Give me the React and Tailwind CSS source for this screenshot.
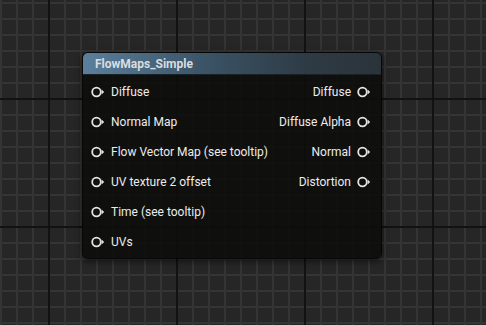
import React from 'react';

const inputs = ['Diffuse', 'Normal Map', 'Flow Vector Map (see tooltip)', 'UV texture 2 offset', 'Time (see tooltip)', 'UVs'];
const outputs = ['Diffuse', 'Diffuse Alpha', 'Normal', 'Distortion'];

function Pin() {
  return (
    <svg width="14" height="12" viewBox="0 0 14 12" className="shrink-0">
      <circle cx="5.5" cy="6" r="4.3" fill="none" stroke="#e4e4e4" strokeWidth="1.8" />
      <path d="M10.6 3.6 L13.2 6 L10.6 8.4 Z" fill="#e4e4e4" />
    </svg>
  );
}

export default function App() {
  return (
    <div className="relative w-[486px] h-[325px] overflow-hidden bg-[#262626] bg-[linear-gradient(to_right,#121212_2px,transparent_2px),linear-gradient(to_bottom,#121212_2px,transparent_2px),linear-gradient(to_right,#343434_2px,transparent_2px),linear-gradient(to_bottom,#343434_2px,transparent_2px)] bg-[size:128px_128px,128px_128px,16px_16px,16px_16px] bg-[position:48px_0,0_98px,0_0,0_2px] font-['Roboto',sans-serif]">
      <div className="absolute left-[82px] top-[52px] w-[300px] rounded-[6px] border border-[#070707] bg-[#0d0e0c]/90 shadow-[0_2px_6px_rgba(0,0,0,0.6)] overflow-hidden">
        <div className="h-[22px] flex items-center pl-[12px] bg-[linear-gradient(to_right,#5b7f9c,#3b5467_40%,#2e3b45_75%,#2b333a)] border-b border-[#1a2228]">
          <span className="text-[12px] font-bold text-[#d9dde0] leading-none">FlowMaps_Simple</span>
        </div>
        <div className="flex justify-between pt-[2px] pb-[1px]">
          <div className="flex flex-col">
            {inputs.map((t) => (
              <div key={t} className="h-[30px] flex items-center gap-[6px] pl-[8px]">
                <Pin />
                <span className="text-[12px] text-[#ececec]">{t}</span>
              </div>
            ))}
          </div>
          <div className="flex flex-col items-end">
            {outputs.map((t) => (
              <div key={t} className="h-[30px] flex items-center gap-[6px] pr-[10px]">
                <span className="text-[12px] text-[#ececec]">{t}</span>
                <Pin />
              </div>
            ))}
          </div>
        </div>
      </div>
    </div>
  );
}
